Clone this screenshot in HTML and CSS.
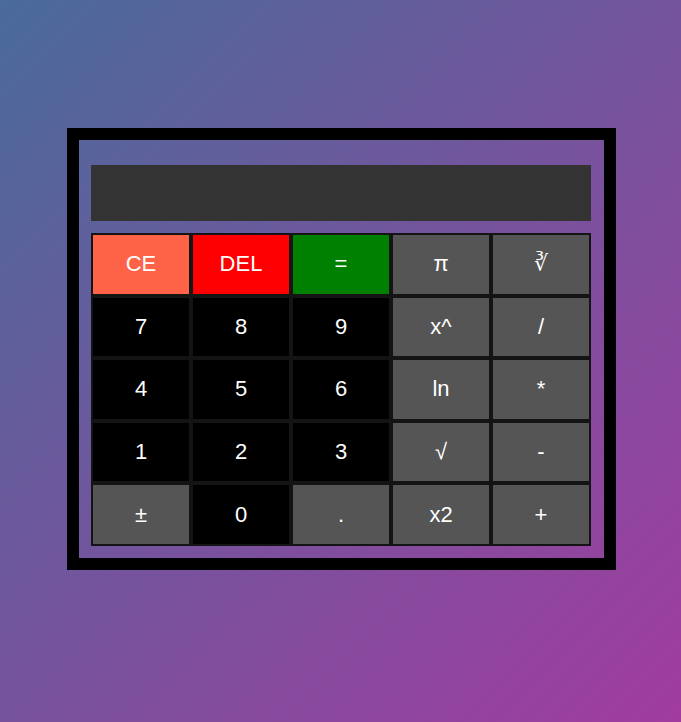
FILE: index.html
```html
<!DOCTYPE html>
<html>
<head>
<meta charset="utf-8">
<link rel="stylesheet" href="styles.css">
</head>
<body>
<div class="calc">
  <div class="display"></div>
  <div class="keys">
    <button class="key ce">CE</button>
    <button class="key del">DEL</button>
    <button class="key eq">=</button>
    <button class="key op">π</button>
    <button class="key op">∛</button>
    <button class="key num">7</button>
    <button class="key num">8</button>
    <button class="key num">9</button>
    <button class="key op">x^</button>
    <button class="key op">/</button>
    <button class="key num">4</button>
    <button class="key num">5</button>
    <button class="key num">6</button>
    <button class="key op">ln</button>
    <button class="key op">*</button>
    <button class="key num">1</button>
    <button class="key num">2</button>
    <button class="key num">3</button>
    <button class="key op">√</button>
    <button class="key op">-</button>
    <button class="key op">±</button>
    <button class="key num">0</button>
    <button class="key op">.</button>
    <button class="key op">x2</button>
    <button class="key op">+</button>
  </div>
</div>
</body>
</html>
```
FILE: styles.css
```css
html, body {
  margin: 0;
  padding: 0;
}
body {
  width: 681px;
  height: 722px;
  background: linear-gradient(135deg, #4a6b9b 0%, #a13c9f 100%);
  font-family: "Liberation Sans", Arial, sans-serif;
  overflow: hidden;
}
.calc {
  box-sizing: border-box;
  width: 549px;
  margin: 128px 0 0 67px;
  border: 12px solid #000;
  padding: 25px 13px 12px 12px;
  display: flex;
  flex-direction: column;
  gap: 12px;
}
.display {
  height: 56px;
  background: #333333;
}
.keys {
  display: grid;
  grid-template-columns: repeat(5, 100px);
  grid-auto-rows: 62.6px;
}
.key {
  box-sizing: border-box;
  margin: 0;
  border: 2px solid #141414;
  color: #fff;
  font-family: "Liberation Sans", Arial, sans-serif;
  font-size: 22px;
  padding: 0;
  display: flex;
  align-items: center;
  justify-content: center;
}
.num { background: #000; }
.op { background: #555555; }
.ce { background: #ff6347; }
.del { background: #ff0000; }
.eq { background: #008000; }
```
